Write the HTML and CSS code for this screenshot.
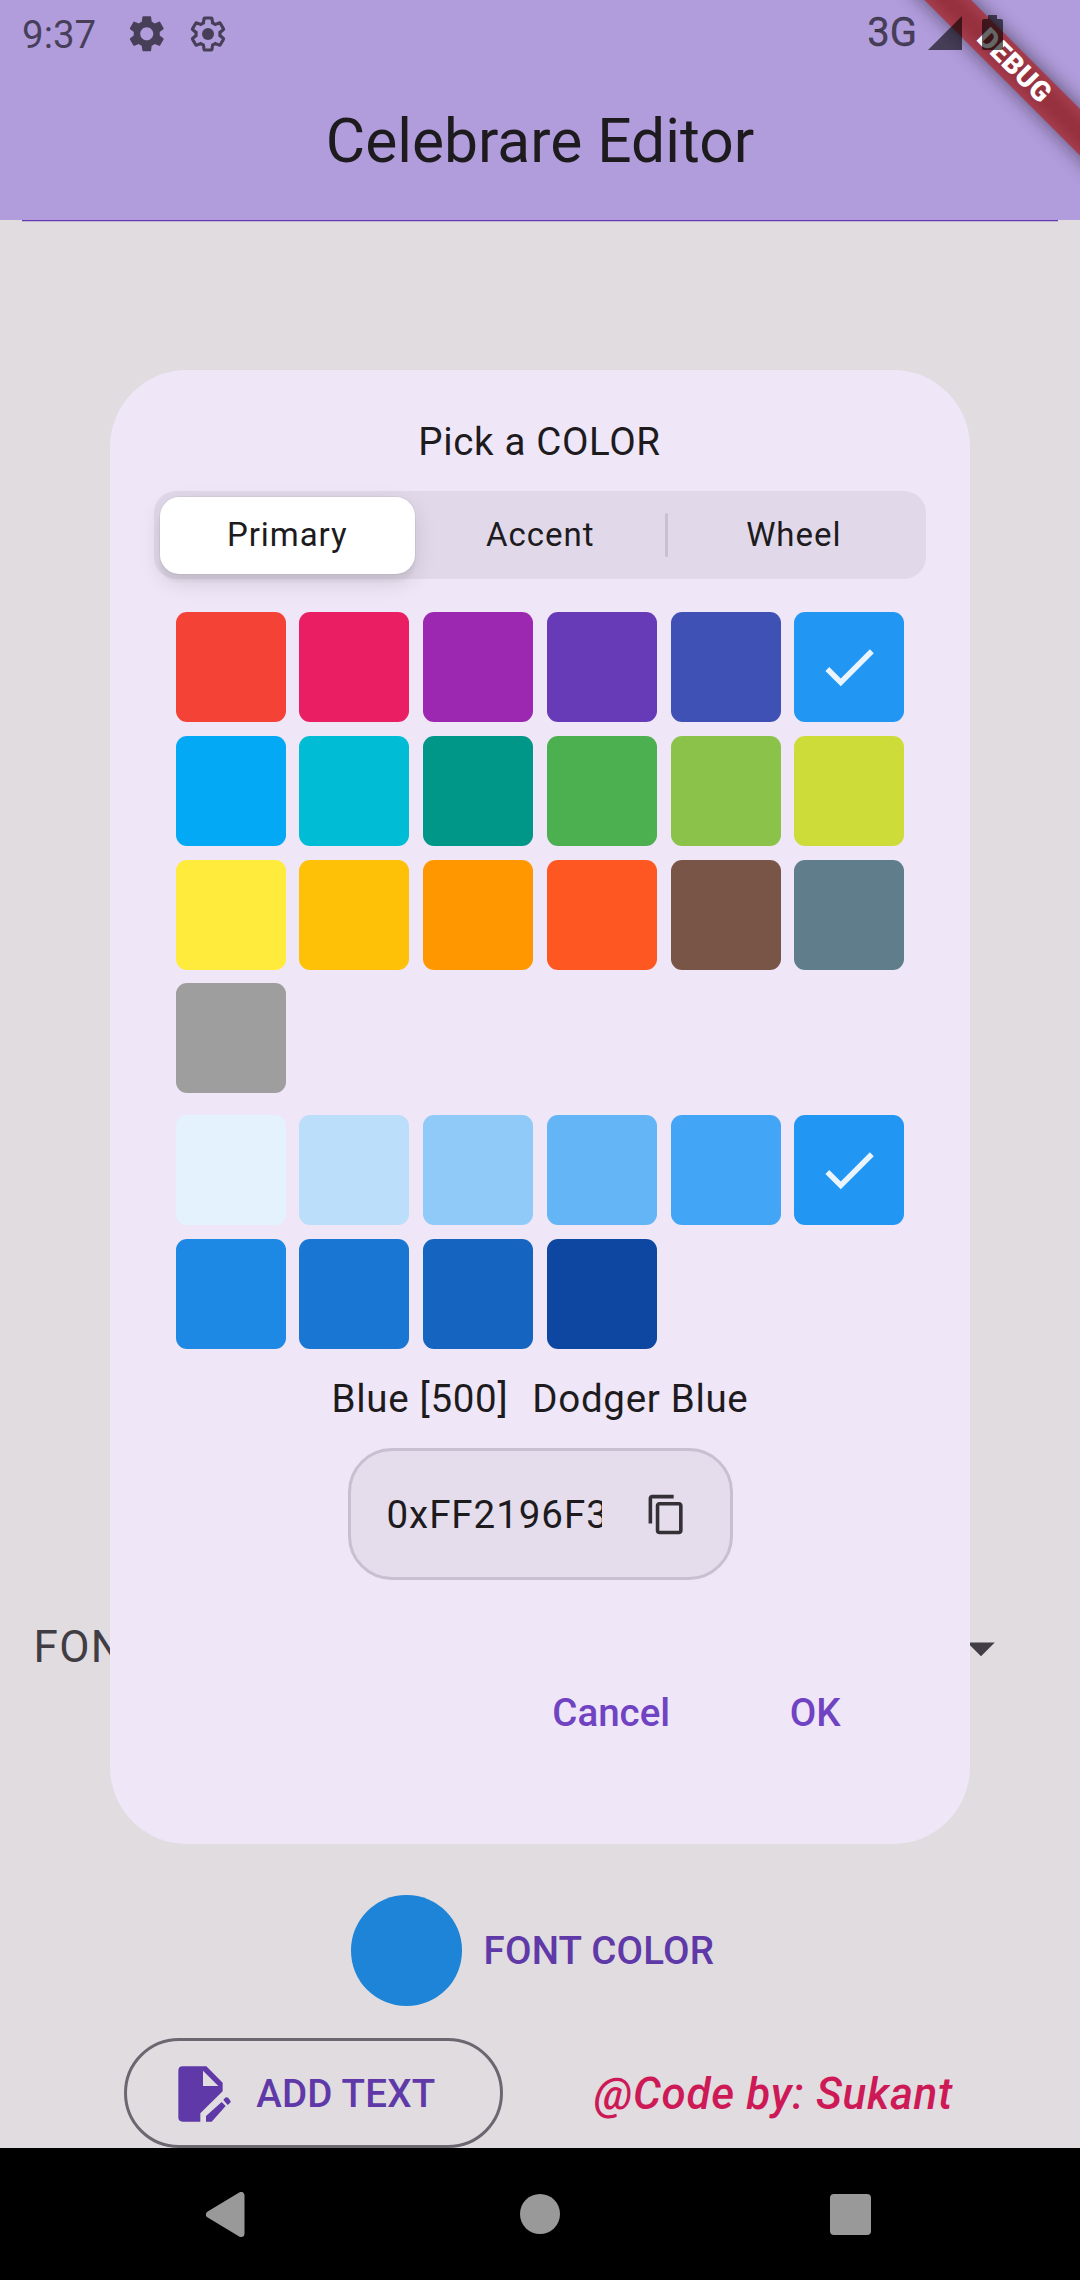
FILE: index.html
```html
<!DOCTYPE html>
<html lang="en">
<head>
<meta charset="utf-8">
<title>Celebrare Editor</title>
<link rel="stylesheet" href="styles.css">
</head>
<body>
<div class="phone">
  <header class="app-bar">
    <div class="debug-banner"><span>DEBUG</span></div>
    <div class="status-bar">
      <span class="clock">9:37</span>
      <svg class="gear-filled" viewBox="0 0 24 24"><path d="M19.14 12.94c.04-.3.06-.61.06-.94 0-.32-.02-.64-.07-.94l2.03-1.58c.18-.14.23-.41.12-.61l-1.92-3.32c-.12-.22-.37-.29-.59-.22l-2.39.96c-.5-.38-1.03-.7-1.62-.94l-.36-2.54c-.04-.24-.24-.41-.48-.41h-3.84c-.24 0-.43.17-.47.41l-.36 2.54c-.59.24-1.13.57-1.62.94l-2.39-.96c-.22-.08-.47 0-.59.22L2.74 8.87c-.12.21-.08.47.12.61l2.03 1.58c-.05.3-.09.63-.09.94s.02.64.07.94l-2.03 1.58c-.18.14-.23.41-.12.61l1.92 3.32c.12.22.37.29.59.22l2.39-.96c.5.38 1.03.7 1.62.94l.36 2.54c.05.24.24.41.48.41h3.84c.24 0 .44-.17.47-.41l.36-2.54c.59-.24 1.13-.56 1.62-.94l2.39.96c.22.08.47 0 .59-.22l1.92-3.32c.12-.22.07-.47-.12-.61l-2.01-1.58zM12 15.6c-1.98 0-3.6-1.62-3.6-3.6s1.62-3.6 3.6-3.6 3.6 1.62 3.6 3.6-1.62 3.6-3.6 3.6z"/></svg>
      <svg class="gear-outline" viewBox="0 0 24 24"><path d="M19.14 12.94c.04-.3.06-.61.06-.94 0-.32-.02-.64-.07-.94l2.03-1.58c.18-.14.23-.41.12-.61l-1.92-3.32c-.12-.22-.37-.29-.59-.22l-2.39.96c-.5-.38-1.03-.7-1.62-.94l-.36-2.54c-.04-.24-.24-.41-.48-.41h-3.84c-.24 0-.43.17-.47.41l-.36 2.54c-.59.24-1.13.57-1.62.94l-2.39-.96c-.22-.08-.47 0-.59.22L2.74 8.87c-.12.21-.08.47.12.61l2.03 1.58c-.05.3-.09.63-.09.94s.02.64.07.94l-2.03 1.58c-.18.14-.23.41-.12.61l1.92 3.32c.12.22.37.29.59.22l2.39-.96c.5.38 1.03.7 1.62.94l.36 2.54c.05.24.24.41.48.41h3.84c.24 0 .44-.17.47-.41l.36-2.54c.59-.24 1.13-.56 1.62-.94l2.39.96c.22.08.47 0 .59-.22l1.92-3.32c.12-.22.07-.47-.12-.61z"/><circle cx="12" cy="12" r="3.6"/></svg>
      <span class="network">3G</span>
      <svg class="signal" viewBox="0 0 34 34"><path d="M34 0V34H0z"/></svg>
      <svg class="battery" viewBox="0 0 21 35"><path d="M6 0h9v4h4a2 2 0 0 1 2 2v27a2 2 0 0 1-2 2H2a2 2 0 0 1-2-2V6a2 2 0 0 1 2-2h4z"/></svg>
    </div>
    <h1 class="title">Celebrare Editor</h1>
  </header>

  <main class="editor">
    <div class="canvas"></div>
    <div class="font-row">
      <span>FONT</span>
      <svg viewBox="0 0 24 24"><path d="M7 10l5 5 5-5z"/></svg>
    </div>
    <div class="color-row">
      <span class="current-color"></span>
      <span class="text-button">FONT COLOR</span>
    </div>
    <div class="action-row">
      <div class="add-text">
        <svg viewBox="0 0 159 168"><path fill-rule="evenodd" d="M14 1H85L134 50V76L67 142V167H14Q1 167 1 154V14Q1 1 14 1zM75 14V60H121z"/><path d="M131 108L143 120L101 167H84V150z"/><path d="M136 102L140 97Q145 91 151 96L155 101Q161 107 155 112L149 117z"/></svg>
        <span>ADD TEXT</span>
      </div>
      <span class="credit">@Code by: Sukant</span>
    </div>
  </main>

  <nav class="nav-bar">
    <svg viewBox="0 0 39 45"><path d="M35 3.5V41.5L3.5 22.5z"/></svg>
    <span class="home"></span>
    <span class="recents"></span>
  </nav>

  <section class="dialog">
    <h2>Pick a COLOR</h2>
    <div class="tabs">
      <span class="tab selected">Primary</span>
      <span class="tab">Accent</span>
      <span class="tab divided">Wheel</span>
    </div>
    <div class="swatches">
      <i style="background:#f44336"></i><i style="background:#e91e63"></i><i style="background:#9c27b0"></i><i style="background:#673ab7"></i><i style="background:#3f51b5"></i>
      <i style="background:#2196f3"><svg viewBox="0 0 24 24"><path d="M9 16.17L4.83 12l-1.42 1.41L9 19 21 7l-1.41-1.41z"/></svg></i>
      <i style="background:#03a9f4"></i><i style="background:#00bcd4"></i><i style="background:#009688"></i><i style="background:#4caf50"></i><i style="background:#8bc34a"></i><i style="background:#cddc39"></i>
      <i style="background:#ffeb3b"></i><i style="background:#ffc107"></i><i style="background:#ff9800"></i><i style="background:#ff5722"></i><i style="background:#795548"></i><i style="background:#607d8b"></i>
      <i style="background:#9e9e9e"></i>
    </div>
    <div class="swatches">
      <i style="background:#e3f2fd"></i><i style="background:#bbdefb"></i><i style="background:#90caf9"></i><i style="background:#64b5f6"></i><i style="background:#42a5f5"></i>
      <i style="background:#2196f3"><svg viewBox="0 0 24 24"><path d="M9 16.17L4.83 12l-1.42 1.41L9 19 21 7l-1.41-1.41z"/></svg></i>
      <i style="background:#1e88e5"></i><i style="background:#1976d2"></i><i style="background:#1565c0"></i><i style="background:#0d47a1"></i>
    </div>
    <div class="names"><span>Blue [500]</span><span>Dodger Blue</span></div>
    <div class="code-field">
      <span>0xFF2196F3</span>
      <svg viewBox="0 0 24 24"><path d="M16 1H4c-1.100 0-2 .9-2 2v14h2V3h12V1zm3 4H8c-1.100 0-2 .9-2 2v14c0 1.100.9 2 2 2h11c1.100 0 2-.9 2-2V7c0-1.100-.9-2-2-2zm0 16H8V7h11v14z"/></svg>
    </div>
    <div class="dialog-actions"><span>Cancel</span><span>OK</span></div>
  </section>
</div>
</body>
</html>
```
FILE: styles.css
```css
* { box-sizing: border-box; }
body {
  margin: 0;
  font-family: Roboto, sans-serif;
  color: #1d1b1e;
}
svg { display: block; flex: none; fill: currentColor; }
.phone {
  position: relative;
  display: flex;
  flex-direction: column;
  width: 1080px;
  height: 2280px;
  overflow: hidden;
  background: #e1dce0;
}

/* App bar and status bar */
.app-bar {
  position: relative;
  height: 220px;
  overflow: hidden;
  background: #b19cdc;
}
.status-bar {
  position: relative;
  display: flex;
  align-items: center;
  height: 66px;
  padding: 0 77px 0 22px;
  color: rgba(0, 0, 0, .6);
}
.clock { width: 75px; font-size: 38.5px; line-height: 45px; padding-top: 2px; }
.gear-filled { width: 43.5px; height: 43.5px; margin: 1px 0 0 28px; }
.gear-outline { width: 40px; height: 40px; margin: 1px 0 0 19.2px; overflow: visible; }
.gear-outline path { fill: none; stroke: currentColor; stroke-width: 1.9; }
.network { margin: -2px 0 0 auto; font-size: 40px; line-height: 45px; -webkit-text-stroke: .4px; }
.signal { width: 34px; height: 34px; margin: -1px 0 0 11px; }
.battery { width: 21px; height: 35px; margin: 0 0 1px 20px; }
.title {
  margin: 0;
  padding-top: 40px;
  font-size: 60.5px;
  font-weight: 400;
  line-height: 72px;
  text-align: center;
}
.debug-banner {
  position: absolute;
  top: 0;
  left: 1080px;
  width: 0;
  height: 0;
  transform: rotate(45deg);
}
.debug-banner span,
.debug-banner::before {
  content: "";
  position: absolute;
  left: -160px;
  top: 77px;
  width: 320px;
  height: 33px;
}
.debug-banner span {
  background: rgba(183, 28, 28, .63);
  color: #fff;
  font-size: 28.05px;
  font-weight: 900;
  line-height: 32px;
  letter-spacing: .4px;
  text-align: center;
}
.debug-banner::before {
  background: rgba(0, 0, 0, .5);
  filter: blur(10px);
}

/* Editor page */
.editor {
  display: flex;
  flex-direction: column;
  height: 1928px;
}
.canvas {
  flex: 1;
  margin: 0 22px;
  background: linear-gradient(#6535b3 1px, #c3b6d3 1px, #c3b6d3 2px, transparent 2px);
}
.font-row {
  display: flex;
  align-items: center;
  justify-content: space-between;
  height: 66px;
  margin-bottom: 215px;
  padding: 0 66px 0 33.5px;
  font-size: 44px;
  letter-spacing: 1.375px;
  color: #413d44;
}
.font-row svg { width: 66px; height: 66px; margin-top: 1px; }
.color-row {
  display: flex;
  align-items: center;
  gap: 22px;
  height: 111px;
  padding-left: 351px;
}
.current-color {
  width: 110.5px;
  height: 110.5px;
  border-radius: 50%;
  background: #1e84d7;
}
.text-button, .add-text {
  font-size: 38.5px;
  font-weight: 500;
  letter-spacing: .2px;
  color: #6039a8;
}
.action-row {
  display: flex;
  align-items: center;
  gap: 91px;
  margin-top: 32px;
  padding-left: 123.5px;
}
.add-text {
  display: flex;
  align-items: center;
  gap: 25.5px;
  width: 379.5px;
  height: 110px;
  padding-left: 51.3px;
  border: 3px solid #6b6771;
  border-radius: 55px;
}
.add-text svg { width: 53px; height: 56px; margin-top: 2px; }
.credit {
  padding-top: 2px;
  font-size: 44px;
  font-style: italic;
  font-weight: 500;
  letter-spacing: .69px;
  white-space: nowrap;
  color: #cd1a57;
}

/* System navigation */
.nav-bar {
  display: flex;
  align-items: center;
  height: 132px;
  padding-left: 206px;
  background: #000;
  color: #999;
}
.nav-bar svg { width: 39px; height: 45px; stroke: currentColor; stroke-width: 7; stroke-linejoin: round; }
.home { width: 40px; height: 40px; margin-left: 275px; border-radius: 50%; background: #999; }
.recents { width: 41px; height: 41px; margin-left: 270px; border-radius: 4px; background: #999; }

/* Color picker dialog */
.dialog {
  position: absolute;
  left: 110px;
  top: 370px;
  width: 860px;
  height: 1474px;
  padding: 44px 44px 0;
  border-radius: 77px;
  background: #efe6f7;
}
.dialog h2 {
  margin: 0;
  padding-right: 1px;
  font-size: 38.5px;
  font-weight: 400;
  line-height: 55px;
  letter-spacing: .65px;
  text-align: center;
}
.tabs {
  display: flex;
  height: 88px;
  margin-top: 22px;
  padding: 5.5px;
  border-radius: 22px;
  background: #e1d9e9;
}
.tab {
  position: relative;
  flex: 1;
  font-size: 33px;
  line-height: 75px;
  letter-spacing: .95px;
  text-align: center;
}
.selected {
  flex: 0 0 255.5px;
  margin-right: -1.5px;
  border-radius: 19.25px;
  background: #fff;
  box-shadow: 0 0 0 1px rgba(0, 0, 0, .04), 0 8px 22px rgba(0, 0, 0, .12), 0 8px 3px rgba(0, 0, 0, .04);
}
.divided::before {
  content: "";
  position: absolute;
  left: -2px;
  top: 16.5px;
  width: 3px;
  height: 44px;
  border-radius: 1.5px;
  background: #c9c1d1;
}
.swatches {
  display: grid;
  grid-template-columns: repeat(6, 110px);
  grid-auto-rows: 110px;
  gap: 13.75px;
  justify-content: center;
  margin-top: 22px;
}
.tabs + .swatches { margin-top: 33px; }
.swatches i {
  display: flex;
  align-items: center;
  justify-content: center;
  border-radius: 11px;
  color: #e9f4fe;
}
.swatches svg { width: 66px; height: 66px; }
.names {
  display: flex;
  justify-content: center;
  gap: 24px;
  margin-top: 22px;
  font-size: 38.5px;
  line-height: 55px;
  letter-spacing: .69px;
}
.code-field {
  display: flex;
  align-items: center;
  justify-content: space-between;
  width: 385px;
  height: 132px;
  margin: 22px auto 0;
  padding: 0 41.5px 0 36px;
  border: 3px solid #c8bfd1;
  border-radius: 44px;
  background: #e5ddec;
}
.code-field span {
  width: 215px;
  overflow: hidden;
  font-size: 38.5px;
  line-height: 55px;
  letter-spacing: .95px;
}
.code-field svg { width: 43px; height: 43px; color: #333036; }
.dialog-actions {
  display: flex;
  justify-content: flex-end;
  gap: 119.5px;
  margin-top: 105px;
  padding-right: 85.5px;
  font-size: 38.5px;
  font-weight: 500;
  line-height: 55px;
  color: #7043c2;
}
```
